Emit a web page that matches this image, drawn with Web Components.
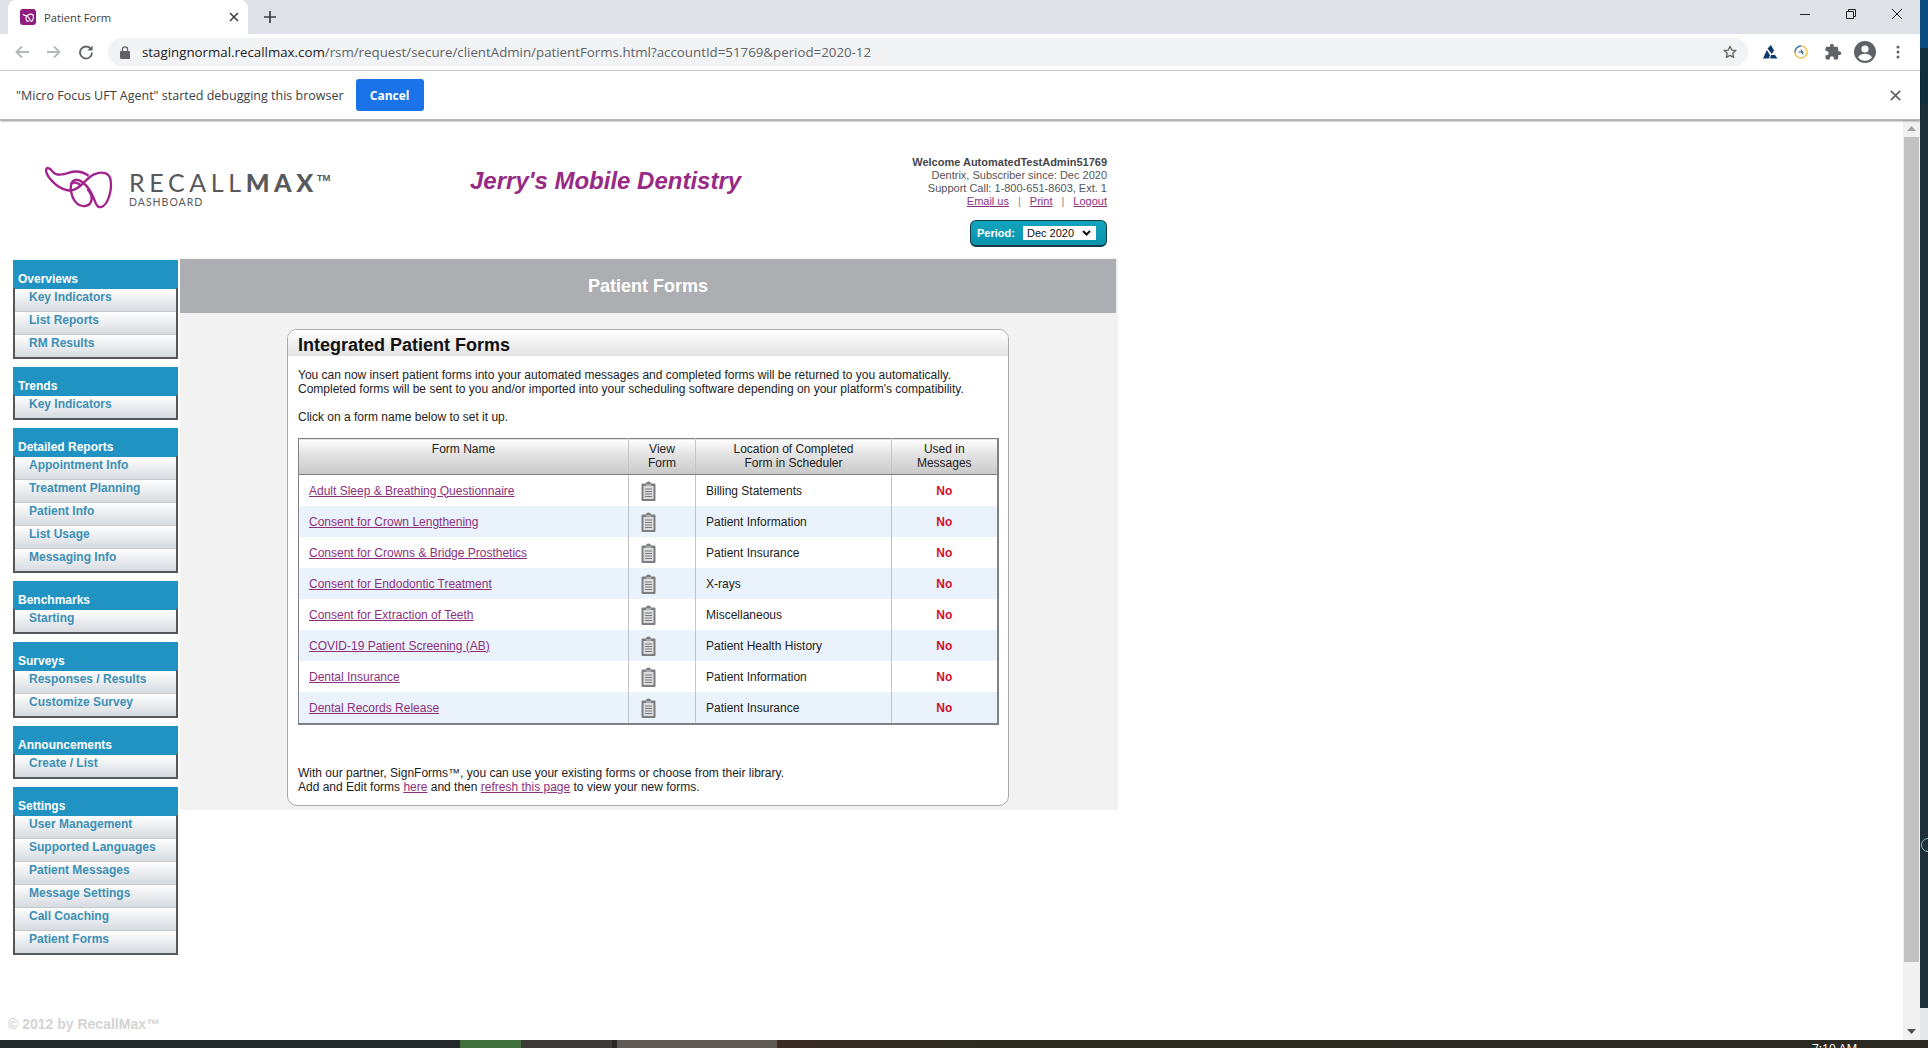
<!DOCTYPE html>
<html>
<head>
<meta charset="utf-8">
<title>Patient Form</title>
<style>
  html, body { margin: 0; padding: 0; height: 100%; overflow: hidden; background: #fff; font-family: "Liberation Sans", Arial, sans-serif; }
</style>
</head>
<body>
<rm-screen>
  <browser-chrome></browser-chrome>
  <debug-bar></debug-bar>
  <rm-header slot="page"></rm-header>
  <rm-sidebar slot="side">
    <side-group heading="Overviews" items="Key Indicators|List Reports|RM Results"></side-group>
    <side-group heading="Trends" items="Key Indicators"></side-group>
    <side-group heading="Detailed Reports" items="Appointment Info|Treatment Planning|Patient Info|List Usage|Messaging Info"></side-group>
    <side-group heading="Benchmarks" items="Starting"></side-group>
    <side-group heading="Surveys" items="Responses / Results|Customize Survey"></side-group>
    <side-group heading="Announcements" items="Create / List"></side-group>
    <side-group heading="Settings" items="User Management|Supported Languages|Patient Messages|Message Settings|Call Coaching|Patient Forms"></side-group>
  </rm-sidebar>
  <rm-main slot="main" heading="Patient Forms">
    <forms-card heading="Integrated Patient Forms"></forms-card>
  </rm-main>
</rm-screen>

<script>
class RmScreen extends HTMLElement {
  constructor() {
    super();
    this.attachShadow({ mode: 'open' }).innerHTML = `
      <style>
        :host { display: flex; flex-direction: column; width: 1928px; height: 1048px; overflow: hidden; }
        .top { display: flex; height: 1040px; }
        .window { width: 1920px; display: flex; flex-direction: column; }
        .view { flex: 1; display: flex; min-height: 0; }
        .page { width: 1903px; overflow: hidden; }
        .cols { display: flex; align-items: flex-start; padding-left: 13px; }
        .side { width: 165px; padding-top: 2px; }
        .main { margin-left: 2px; }
      </style>
      <div class="top">
        <div class="window">
          <slot></slot>
          <div class="view">
            <div class="page">
              <slot name="page"></slot>
              <div class="cols">
                <div class="side"><slot name="side"></slot></div>
                <div class="main"><slot name="main"></slot></div>
              </div>
              <copy-line>© 2012 by RecallMax™</copy-line>
            </div>
            <page-scroll></page-scroll>
          </div>
        </div>
        <desktop-strip></desktop-strip>
      </div>
      <task-bar></task-bar>
    `;
  }
}

class BrowserChrome extends HTMLElement {
  constructor() {
    super();
    this.attachShadow({ mode: 'open' }).innerHTML = `
      <style>
        :host { display: block; font-family: "Open Sans", "Liberation Sans", sans-serif; }
        .tabs { height: 34px; background: #dee1e6; display: flex; align-items: flex-end; padding-left: 8px; }
        .tab { width: 240px; height: 34px; box-sizing: border-box; background: #fff; border-radius: 8px 8px 0 0; display: flex; align-items: center; padding: 0 8px 0 12px; }
        .fav { width: 16px; height: 16px; display: block; }
        .name { margin-left: 8px; font-size: 11.2px; color: #3c4043; flex: 1; }
        .tabx { width: 12px; height: 12px; display: block; }
        .plus { width: 14px; height: 14px; margin: 0 0 10px 15px; display: block; }
        .win { margin-left: auto; display: flex; align-items: center; align-self: stretch; padding: 0 18px 6px 0; gap: 36px; }
        .win svg { width: 10px; height: 10px; display: block; }
        .tools { height: 36px; border-bottom: 1px solid #cfd1d4; display: flex; align-items: center; background: #fff; }
        .tools svg { display: block; }
        .nav { display: flex; align-items: center; width: 108px; padding-left: 14px; box-sizing: border-box; gap: 16px; }
        .url { width: 1640px; height: 28px; background: #f1f3f4; border-radius: 14px; display: flex; align-items: center; box-sizing: border-box; padding: 0 10px 0 12px; }
        .url span.t { margin-left: 12px; font-size: 13.3px; color: #5f6368; white-space: nowrap; flex: 1; }
        .url b { font-weight: 400; color: #202124; }
        .ext { display: flex; align-items: center; margin-left: 15px; gap: 12px; }
      </style>
      <div class="tabs">
        <div class="tab">
          <svg class="fav" viewBox="0 0 16 16"><rect width="16" height="16" rx="3" fill="#8f1d80"/><path d="M3 5c1 2 3 2 5 1s4-1 5 0 0 5-1 6-2-1-3-3-3-2-3 0 1 4 3 3" fill="none" stroke="#fff" stroke-width="1.2"/></svg>
          <span class="name">Patient Form</span>
          <svg class="tabx" viewBox="0 0 12 12"><path d="M2 2l8 8M10 2l-8 8" stroke="#3c4043" stroke-width="1.6"/></svg>
        </div>
        <svg class="plus" viewBox="0 0 14 14"><path d="M7 1v12M1 7h12" stroke="#3c4043" stroke-width="1.7"/></svg>
        <div class="win">
          <svg viewBox="0 0 10 10"><path d="M0 5.500h10" stroke="#222" stroke-width="1"/></svg>
          <svg viewBox="0 0 10 10"><path d="M.5 2.500h7v7h-7zM2.500 2.500v-2h7v7h-2" fill="none" stroke="#222" stroke-width="1"/></svg>
          <svg viewBox="0 0 10 10"><path d="M0 0l10 10M10 0L0 10" stroke="#222" stroke-width="1"/></svg>
        </div>
      </div>
      <div class="tools">
        <div class="nav">
          <svg width="16" height="16" viewBox="0 0 16 16"><path d="M15 8H2.500M8 2.500L2.500 8 8 13.500" fill="none" stroke="#b4b7bb" stroke-width="1.800"/></svg>
          <svg width="16" height="16" viewBox="0 0 16 16"><path d="M1 8h12.500M8 2.500L13.500 8 8 13.500" fill="none" stroke="#b4b7bb" stroke-width="1.800"/></svg>
          <svg width="16" height="16" viewBox="0 0 16 16"><path d="M13 5.200A6 6 0 1 0 14 8.500" fill="none" stroke="#5f6368" stroke-width="1.800"/><path d="M14.600 1.400v5.200H9.400z" fill="#5f6368"/></svg>
        </div>
        <div class="url">
          <svg width="10" height="13" viewBox="0 0 10 13"><path d="M2.400 5V3.400a2.600 2.600 0 0 1 5.200 0V5" fill="none" stroke="#5f6368" stroke-width="1.300"/><rect y="5" width="10" height="8" rx="1" fill="#5f6368"/></svg>
          <span class="t"><b>stagingnormal.recallmax.com</b>/rsm/request/secure/clientAdmin/patientForms.html?accountId=51769&amp;period=2020-12</span>
          <svg width="16" height="16" viewBox="0 0 24 24"><path d="M12 3.500l2.600 5.600 6.100.7-4.500 4.200 1.200 6L12 17l-5.400 3 1.200-6-4.500-4.200 6.100-.7z" fill="none" stroke="#5f6368" stroke-width="2" stroke-linejoin="round"/></svg>
        </div>
        <div class="ext">
          <svg width="16" height="14" viewBox="0 0 16 14"><path d="M8 0l3 5.500-2.200 3.600L4.500 3.500z" fill="#0d3a6e"/><path d="M3.800 5L7 10.200 5.800 13.500H0z" fill="#0d3a6e"/><path d="M8 10h4l2.500 3.500H7z" fill="#0d3a6e"/></svg>
          <svg style="margin-left:2px" width="16" height="16" viewBox="0 0 16 16"><circle cx="8" cy="8" r="6" fill="#fff" stroke="#f0c35a" stroke-width="1.600"/><path d="M2 8a6 6 0 0 1 6-6" fill="none" stroke="#3f7fc0" stroke-width="1.600"/><path d="M5.500 8h5M8 5.500l2 5" stroke="#1d4f80" stroke-width="1"/></svg>
          <svg style="margin-left:3px" width="18" height="18" viewBox="0 0 24 24"><path d="M20.500 11H19V7c0-1.100-.9-2-2-2h-4V3.500C13 2.120 11.880 1 10.500 1S8 2.120 8 3.500V5H4c-1.100 0-1.990.9-1.990 2v3.800H3.500c1.490 0 2.700 1.210 2.700 2.700s-1.210 2.700-2.700 2.700H2V20c0 1.100.9 2 2 2h3.800v-1.500c0-1.490 1.210-2.700 2.700-2.700s2.700 1.210 2.700 2.700V22H17c1.100 0 2-.9 2-2v-4h1.500c1.380 0 2.500-1.120 2.500-2.500S21.880 11 20.500 11z" fill="#5f6368"/></svg>
          <svg width="22" height="22" viewBox="0 0 22 22"><circle cx="11" cy="11" r="11" fill="#5f6368"/><circle cx="11" cy="8" r="3.600" fill="#fff"/><path d="M4 16.200c1.800-2.600 4.500-3.400 7-3.400s5.200.8 7 3.400A8.800 8.800 0 0 1 11 19.800a8.800 8.800 0 0 1-7-3.600z" fill="#fff"/></svg>
          <svg style="margin-left:8px" width="4" height="14" viewBox="0 0 4 14"><circle cx="2" cy="2" r="1.500" fill="#5f6368"/><circle cx="2" cy="7" r="1.500" fill="#5f6368"/><circle cx="2" cy="12" r="1.500" fill="#5f6368"/></svg>
        </div>
      </div>
    `;
  }
}

class DebugBar extends HTMLElement {
  constructor() {
    super();
    this.attachShadow({ mode: 'open' }).innerHTML = `
      <style>
        :host { display: flex; align-items: center; height: 49px; box-sizing: border-box; padding: 0 19px 0 16px; background: #fff; font-family: "Open Sans", "Liberation Sans", sans-serif; box-shadow: 0 1px 2px rgba(0,0,0,.45); position: relative; z-index: 2; border-bottom: 1px solid #b9b9b9; }
        .msg { font-size: 12.5px; color: #3c4043; }
        button { margin-left: 12px; width: 68px; height: 32px; border: 0; border-radius: 3px; background: #1a73e8; color: #fff; font: 700 12px "Open Sans", "Liberation Sans", sans-serif; }
        svg { margin-left: auto; display: block; }
      </style>
      <span class="msg">"Micro Focus UFT Agent" started debugging this browser</span>
      <button>Cancel</button>
      <svg width="11" height="11" viewBox="0 0 11 11"><path d="M.8.800l9.400 9.400M10.200.800L.8 10.200" stroke="#5f6368" stroke-width="1.700"/></svg>
    `;
  }
}

class RmHeader extends HTMLElement {
  constructor() {
    super();
    this.attachShadow({ mode: 'open' }).innerHTML = `
      <style>
        :host { display: grid; grid-template-columns: 470px 1fr auto; width: 1118px; height: 138px; box-sizing: border-box; padding-right: 11px; background: #fff; }
        .brand { display: flex; padding: 41px 0 0 40px; }
        .brand svg { display: block; width: 80px; height: 52px; flex: none; }
        .word { margin: 11px 0 0 9px; font-family: Lato, "Liberation Sans", sans-serif; color: #58595b; }
        .mark { font-size: 25px; line-height: 21px; letter-spacing: 4.6px; white-space: nowrap; display: flex; align-items: flex-start; }
        .mark b { font-weight: 900; }
        .mark i { font: 700 9.5px/10px "Liberation Sans", sans-serif; letter-spacing: 0; margin: 1px 0 0 -1px; }
        .dash { font-size: 10.5px; line-height: 12px; letter-spacing: 1px; margin-top: 3px; }
        .company { margin: 47px 0 0; font: italic 700 24px/28px "Liberation Sans", sans-serif; color: #972a85; white-space: nowrap; }
        .who { padding-top: 36px; text-align: right; font-size: 11px; line-height: 13px; color: #55555a; display: flex; flex-direction: column; align-items: flex-end; }
        .who strong { font-weight: 700; color: #46464a; }
        .who a { color: #8e2f7d; }
        .who .sep { margin: 0 9px; color: #888; }
        .period { margin-top: 12px; width: 137px; height: 27px; box-sizing: border-box; border: 1px solid #123a48; border-bottom-width: 2px; border-radius: 6px; background: linear-gradient(#12a3bd, #0a93ad); display: flex; align-items: center; padding: 0 10px 0 6px; color: #fff; font-weight: 700; font-size: 11px; }
        .sel { margin-left: auto; width: 73px; height: 14px; box-sizing: border-box; background: #fff; color: #111; font-weight: 400; display: flex; align-items: center; padding: 0 5px 0 4px; justify-content: space-between; }
      </style>
      <div class="brand">
        <svg viewBox="0 0 240 156" fill="none" stroke="#a3238e" stroke-width="7" stroke-linejoin="round">
          <path d="M18 30C18 16 30 20 38 32C48 44 68 42 88 35C108 28 128 32 146 44"/>
          <path d="M18 30C22 50 50 78 75 86C92 92 104 88 124 72C136 60 146 48 162 40C186 30 210 34 212 60C216 88 204 132 184 138C168 142 166 120 156 100C146 80 132 64 118 58C102 52 92 62 92 84C96 116 112 138 136 135C160 130 160 104 142 84"/>
          <path d="M92 70C102 56 116 70 124 72"/>
        </svg>
        <div class="word">
          <div class="mark">RECALL<b>MAX</b><i>TM</i></div>
          <div class="dash">DASHBOARD</div>
        </div>
      </div>
      <div class="company">Jerry's Mobile Dentistry</div>
      <div class="who">
        <strong>Welcome AutomatedTestAdmin51769</strong>
        <span>Dentrix, Subscriber since: Dec 2020</span>
        <span>Support Call: 1-800-651-8603, Ext. 1</span>
        <span><a href="#">Email us</a><span class="sep">|</span><a href="#">Print</a><span class="sep">|</span><a href="#">Logout</a></span>
        <div class="period">Period:
          <div class="sel">Dec 2020
            <svg width="9" height="6" viewBox="0 0 9 6"><path d="M1 1l3.500 3.500L8 1" fill="none" stroke="#111" stroke-width="2"/></svg>
          </div>
        </div>
      </div>
    `;
  }
}

class RmSidebar extends HTMLElement {
  constructor() {
    super();
    this.attachShadow({ mode: 'open' }).innerHTML = `
      <style>:host { display: flex; flex-direction: column; gap: 8px; }</style>
      <slot></slot>
    `;
  }
}

class SideGroup extends HTMLElement {
  constructor() {
    super();
    const items = (this.getAttribute('items') || '').split('|');
    this.attachShadow({ mode: 'open' }).innerHTML = `
      <style>
        :host { display: block; border: solid #54575c; border-width: 0 2px 2px; background: #fff; }
        .head { height: 28px; margin: 0 -2px; box-sizing: border-box; padding: 11px 0 0 5px; background: #2193c2; color: #fff; font-weight: 700; font-size: 12px; line-height: 16px; }
        .item { display: block; height: 23px; box-sizing: border-box; padding: 1px 0 0 14px; line-height: 14px; font-size: 12px; font-weight: 700; color: #3d8fb5; text-decoration: none; background: linear-gradient(#fff, #f0f2f4 35%, #d6dbe0); border-top: 1px solid #c6c9cc; }
        .item:first-of-type { border-top-color: #2193c2; }
      </style>
      <div class="head">${this.getAttribute('heading')}</div>
      ${items.map((t) => `<a class="item" href="#">${t}</a>`).join('')}
    `;
  }
}

class RmMain extends HTMLElement {
  constructor() {
    super();
    this.attachShadow({ mode: 'open' }).innerHTML = `
      <style>
        :host { display: block; width: 938px; height: 552px; box-sizing: border-box; padding: 1px 2px 0 0; background: #f2f2f3; }
        h2 { margin: 0 0 16px; height: 54px; background: #adaeb1; color: #fff; text-align: center; font-size: 18px; line-height: 54px; font-weight: 700; }
        .wrap { padding-left: 107px; }
      </style>
      <h2>${this.getAttribute('heading')}</h2>
      <div class="wrap"><slot></slot></div>
    `;
  }
}

const FORM_ROWS = [
  ['Adult Sleep &amp; Breathing Questionnaire', 'Billing Statements'],
  ['Consent for Crown Lengthening', 'Patient Information'],
  ['Consent for Crowns &amp; Bridge Prosthetics', 'Patient Insurance'],
  ['Consent for Endodontic Treatment', 'X-rays'],
  ['Consent for Extraction of Teeth', 'Miscellaneous'],
  ['COVID-19 Patient Screening (AB)', 'Patient Health History'],
  ['Dental Insurance', 'Patient Information'],
  ['Dental Records Release', 'Patient Insurance'],
];

const CLIP_ICON = `<svg width="15" height="20" viewBox="0 0 15 20"><path d="M5 2.500a2.500 2 0 0 1 5 0h3.500a1 1 0 0 1 1 1V19a1 1 0 0 1-1 1h-12a1 1 0 0 1-1-1V3.500a1 1 0 0 1 1-1z" fill="#7d7e82"/><rect x="2.500" y="5" width="10" height="13" fill="#dcdcde"/><path d="M4 8h7M4 10.500h7M4 13h7M4 15.500h7" stroke="#77787c" stroke-width="1"/><rect x="5" y="3" width="5" height="2" fill="#a9aaad"/></svg>`;

class FormsCard extends HTMLElement {
  constructor() {
    super();
    this.attachShadow({ mode: 'open' }).innerHTML = `
      <style>
        :host { display: block; width: 722px; height: 477px; box-sizing: border-box; border: 1px solid #a9a9ab; border-radius: 10px; background: #fff; font-size: 12px; line-height: 14px; color: #1c1c1c; overflow: hidden; }
        h3 { margin: 0; height: 26px; padding-left: 10px; background: linear-gradient(#fff, #e2e2e2); color: #111; font-size: 18px; line-height: 30px; font-weight: 700; }
        p { margin: 0; padding: 0 10px; }
        .intro { margin-top: 12px; }
        .pick { margin-top: 14px; }
        table { margin: 14px 0 0 10px; width: 699px; border-collapse: collapse; table-layout: fixed; border: 1px solid #808185; border-width: 1px 2px 2px 1px; }
        th { height: 36px; padding: 3px 0; box-sizing: border-box; font-weight: 400; background: linear-gradient(#fff, #e4e4e4 40%, #c9c9c9); border-bottom: 1px solid #808185; border-right: 1px solid #c1c4c8; vertical-align: top; color: #222; }
        td { height: 31px; padding: 0; border-right: 1px solid #c1c4c8; }
        tr:nth-child(even) td { background: #eaf3fb; }
        td:last-child, th:last-child { border-right: 0; }
        .n { padding-left: 10px; }
        .n a, p a { color: #8e2f7d; }
        .i svg { display: block; margin-left: 12px; }
        .l { padding-left: 10px; }
        .u { text-align: center; color: #d40e26; font-weight: 700; }
        .foot { margin-top: 41px; }
      </style>
      <h3>${this.getAttribute('heading')}</h3>
      <p class="intro">You can now insert patient forms into your automated messages and completed forms will be returned to you automatically.<br>Completed forms will be sent to you and/or imported into your scheduling software depending on your platform's compatibility.</p>
      <p class="pick">Click on a form name below to set it up.</p>
      <table>
        <colgroup><col style="width:330px"><col style="width:67px"><col style="width:196px"><col style="width:106px"></colgroup>
        <thead><tr><th>Form Name</th><th>View<br>Form</th><th>Location of Completed<br>Form in Scheduler</th><th>Used in<br>Messages</th></tr></thead>
        <tbody>
          ${FORM_ROWS.map((r) => `<tr><td class="n"><a href="#">${r[0]}</a></td><td class="i">${CLIP_ICON}</td><td class="l">${r[1]}</td><td class="u">No</td></tr>`).join('')}
        </tbody>
      </table>
      <p class="foot">With our partner, SignForms™, you can use your existing forms or choose from their library.<br>Add and Edit forms <a href="#">here</a> and then <a href="#">refresh this page</a> to view your new forms.</p>
    `;
  }
}

class CopyLine extends HTMLElement {
  constructor() {
    super();
    this.attachShadow({ mode: 'open' }).innerHTML = `
      <style>:host { display: block; margin-top: 61px; padding-left: 8px; font-size: 14px; line-height: 16px; font-weight: 700; color: #d4d4d4; }</style>
      <slot></slot>
    `;
  }
}

class PageScroll extends HTMLElement {
  constructor() {
    super();
    this.attachShadow({ mode: 'open' }).innerHTML = `
      <style>
        :host { display: flex; flex-direction: column; width: 17px; background: #f1f1f1; }
        .btn { height: 17px; display: flex; align-items: center; justify-content: center; }
        .thumb { flex: 1; margin: 0 1px 61px; background: #c1c1c1; }
      </style>
      <div class="btn"><svg width="9" height="5" viewBox="0 0 9 5"><path d="M4.500 0L9 5H0z" fill="#a3a3a3"/></svg></div>
      <div class="thumb"></div>
      <div class="btn"><svg width="9" height="5" viewBox="0 0 9 5"><path d="M0 0h9L4.500 5z" fill="#505050"/></svg></div>
    `;
  }
}

class DesktopStrip extends HTMLElement {
  constructor() {
    super();
    this.attachShadow({ mode: 'open' }).innerHTML = `
      <style>
        :host { display: flex; flex-direction: column; width: 8px; background: #1b2e39; overflow: hidden; }
        .a { height: 48px; background: #0a4d80; }
        .b { height: 56px; background: #0f2f3c; }
        .c { height: 904px; background: #1c2f3a; padding: 734px 0 0 1px; box-sizing: border-box; }
        .ring { width: 14px; height: 14px; box-sizing: border-box; border: 1px solid #8fb4c2; border-radius: 50%; }
        .d { flex: 1; background: #e6e8ea; }
      </style>
      <div class="a"></div><div class="b"></div>
      <div class="c"><div class="ring"></div></div>
      <div class="d"></div>
    `;
  }
}

class TaskBar extends HTMLElement {
  constructor() {
    super();
    this.attachShadow({ mode: 'open' }).innerHTML = `
      <style>
        :host { display: flex; height: 8px; background: #23282a; overflow: hidden; font: 12px/18px "Open Sans", "Liberation Sans", sans-serif; color: #fff; }
        div { flex: none; }
        .s0 { width: 460px; }
        .s1 { width: 61px; background: #41703c; }
        .s2 { width: 91px; background: #3e3a38; }
        .s3 { width: 5px; background: #2a2826; }
        .s4 { width: 160px; background: #5f5a55; }
        .s5 { width: 1035px; background: linear-gradient(90deg, #3a2c25, #2c2b22 20%, #2b2a22); }
        .clock { width: 116px; background: #2b2a22; }
      </style>
      <div class="s0"></div><div class="s1"></div><div class="s2"></div><div class="s3"></div><div class="s4"></div><div class="s5"></div>
      <div class="clock">7:10 AM</div>
    `;
  }
}

customElements.define('rm-screen', RmScreen);
customElements.define('browser-chrome', BrowserChrome);
customElements.define('debug-bar', DebugBar);
customElements.define('rm-header', RmHeader);
customElements.define('rm-sidebar', RmSidebar);
customElements.define('side-group', SideGroup);
customElements.define('rm-main', RmMain);
customElements.define('forms-card', FormsCard);
customElements.define('copy-line', CopyLine);
customElements.define('page-scroll', PageScroll);
customElements.define('desktop-strip', DesktopStrip);
customElements.define('task-bar', TaskBar);
</script>
</body>
</html>
